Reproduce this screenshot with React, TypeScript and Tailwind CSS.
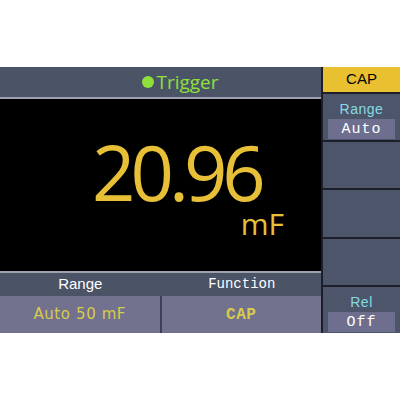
import React from "react";

const sans = "font-['Liberation_Sans',Arial,sans-serif]";
const mono = "font-['Liberation_Mono','DejaVu_Sans_Mono',monospace]";
const humanist = "font-['Open_Sans','Noto_Sans',sans-serif]";

// 右側のソフトキー
const SoftKey: React.FC<{ label?: string; value?: string }> = ({ label, value }) => (
  <div className="flex flex-1 flex-col items-center bg-[#4d556b]">
    {label && (
      <>
        <div className={`mt-[8px] text-[14px] leading-none tracking-[0.5px] text-[#86dce4] ${sans}`}>
          {label}
        </div>
        <div
          className={`mt-auto mb-[1px] flex h-[20px] w-[67px] items-center justify-center bg-[#6e6e8e] text-[15px] leading-none tracking-[1px] text-white ${mono}`}
        >
          {value}
        </div>
      </>
    )}
  </div>
);

export default function App() {
  return (
    <div className="h-[400px] w-[400px] bg-white pt-[67px]">
      <div className="flex h-[266px]">
        {/* メイン表示 */}
        <div className="flex w-[321px] flex-col">
          <div className="flex h-[32px] items-center justify-center border-b-2 border-[#9ea2ae] bg-[#4b5367] pl-[40px]">
            <span className="mr-[2px] h-[12px] w-[12px] rounded-full bg-[#8fe03a]" />
            <span className={`text-[19px] leading-none text-[#8fe03a] ${humanist}`}>Trigger</span>
          </div>
          <div className="flex flex-1 flex-col bg-black">
            <div
              className={`pl-[92px] pt-[39px] text-[76px] leading-[68px] tracking-[-5px] text-[#e8c037] ${humanist}`}
            >
              20.96
            </div>
            <div className={`mt-[3px] pr-[37px] text-right text-[30px] leading-none text-[#e8c037] ${humanist}`}>
              mF
            </div>
          </div>
          <div className="grid h-[25px] grid-cols-2 border-t-2 border-[#9ea2ae] bg-[#4b5367]">
            <div className={`flex items-center justify-center text-[15px] text-white ${sans}`}>Range</div>
            <div className={`flex items-center justify-center pl-[2px] text-[14px] text-white ${mono}`}>
              Function
            </div>
          </div>
          <div className="grid h-[37px] grid-cols-2 gap-[2px] bg-[#3c4256]">
            <div
              className={`flex items-center justify-center bg-[#72728f] text-[15px] tracking-[0.6px] text-[#d9cb4c] ${"font-['DejaVu_Sans',sans-serif]"}`}
            >
              Auto 50 mF
            </div>
            <div
              className={`flex items-center justify-center bg-[#72728f] text-[16px] font-bold tracking-[0.5px] text-[#d9cb4c] ${mono}`}
            >
              CAP
            </div>
          </div>
        </div>

        {/* ソフトキー列 */}
        <div className="flex w-[79px] flex-col gap-[2px] border-l-2 border-[#1c1f2a] bg-[#1c1f2a]">
          <div
            className={`flex h-[25px] items-center justify-center bg-[#e8c030] text-[15px] text-black ${"font-['Liberation_Sans_Narrow','Liberation_Sans',sans-serif]"}`}
          >
            CAP
          </div>
          <SoftKey label="Range" value="Auto" />
          <SoftKey />
          <SoftKey />
          <SoftKey />
          <SoftKey label="Rel" value="Off" />
        </div>
      </div>
    </div>
  );
}
